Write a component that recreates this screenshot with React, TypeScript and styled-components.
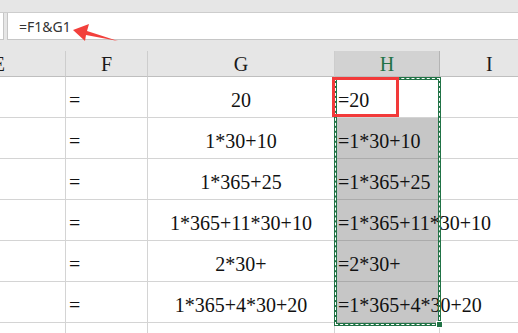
import React from "react";
import styled, { createGlobalStyle } from "styled-components";

const GlobalStyle = createGlobalStyle`
  html, body {
    margin: 0;
    padding: 0;
    background: #ffffff;
    overflow: hidden;
  }
`;

const Page = styled.div`
  position: relative;
  width: 518px;
  height: 333px;
  overflow: hidden;
  background: #e6e6e6;
`;

const TopStrip = styled.div`
  height: 12px;
  background: #e6e6e6;
  border-bottom: 1px solid #cdcdcd;
`;

const FormulaRow = styled.div`
  display: flex;
  height: 27px;
  gap: 3px;
  box-sizing: border-box;
`;

const NameBox = styled.div`
  width: 3px;
  background: #ffffff;
  border-right: 1px solid #c6c6c6;
  border-bottom: 1px solid #c6c6c6;
`;

const FormulaInput = styled.div`
  flex: 1;
  display: flex;
  align-items: center;
  padding-left: 11px;
  background: #ffffff;
  border-left: 1px solid #c6c6c6;
  border-bottom: 1px solid #c6c6c6;
  font-family: "Noto Sans", "Liberation Sans", sans-serif;
  font-size: 14px;
  color: #333333;
`;

const HeaderGap = styled.div`
  height: 11px;
  background: #e6e6e6;
`;

const Sheet = styled.div`
  display: grid;
  grid-template-columns: 136px 82px 187px 105px 100px;
  grid-template-rows: 26px repeat(7, 41px);
  margin-left: -70px;
  background: #ffffff;
`;

const ColHead = styled.div<{ $active?: boolean }>`
  box-sizing: border-box;
  display: flex;
  align-items: center;
  justify-content: center;
  padding-top: 2px;
  background: ${(p) => (p.$active ? "#d2d2d2" : "#e6e6e6")};
  border-right: 1px solid ${(p) => (p.$active ? "#b4b4b4" : "#cdcdcd")};
  border-bottom: 1px solid #bfbfbf;
  font-family: "Liberation Serif", serif;
  font-size: 20px;
  color: ${(p) => (p.$active ? "#217346" : "#1a1a1a")};
`;

const Cell = styled.div<{
  $align?: "left" | "center";
  $selected?: boolean;
}>`
  box-sizing: border-box;
  display: flex;
  align-items: center;
  justify-content: ${(p) => (p.$align === "center" ? "center" : "flex-start")};
  padding: 6px 3px 0 3px;
  white-space: nowrap;
  overflow: visible;
  min-width: 0;
  position: ${(p) => (p.$selected ? "relative" : "static")};
  z-index: ${(p) => (p.$selected ? 1 : "auto")};
  background: ${(p) => (p.$selected ? "#c6c6c6" : "transparent")};
  border-right: 1px solid #d4d4d4;
  border-bottom: 1px solid ${(p) => (p.$selected ? "#ababab" : "#d4d4d4")};
  font-family: "Liberation Serif", serif;
  font-size: 20px;
  color: #111111;
`;

const Marquee = styled.div`
  position: absolute;
  z-index: 2;
  left: 334px;
  top: 77px;
  width: 107px;
  height: 249px;
  box-sizing: border-box;
  border: 3px solid #217346;
  pointer-events: none;

  &::before {
    content: "";
    position: absolute;
    inset: -2px;
    border: 1px dashed #ffffff;
  }

  &::after {
    content: "";
    position: absolute;
    right: -5px;
    bottom: -5px;
    width: 5px;
    height: 5px;
    background: #217346;
    border: 1px solid #ffffff;
  }
`;

const ActiveMark = styled.div`
  position: absolute;
  z-index: 3;
  left: 332px;
  top: 77px;
  width: 67px;
  height: 40px;
  box-sizing: border-box;
  border: 3px solid #f23a3a;
  pointer-events: none;
`;

const Arrow = styled.svg`
  position: absolute;
  z-index: 3;
  left: 0;
  top: 0;
  pointer-events: none;
`;

const rows = [
  { g: "20", h: "=20" },
  { g: "1*30+10", h: "=1*30+10" },
  { g: "1*365+25", h: "=1*365+25" },
  { g: "1*365+11*30+10", h: "=1*365+11*30+10" },
  { g: "2*30+", h: "=2*30+" },
  { g: "1*365+4*30+20", h: "=1*365+4*30+20" },
  { g: "", h: "" },
];

export default function App() {
  return (
    <>
      <GlobalStyle />
      <Page>
        <TopStrip />
        <FormulaRow>
          <NameBox />
          <FormulaInput>=F1&amp;G1</FormulaInput>
        </FormulaRow>
        <HeaderGap />
        <Sheet>
          <ColHead style={{ justifyContent: "flex-end", paddingRight: 60 }}>E</ColHead>
          <ColHead>F</ColHead>
          <ColHead>G</ColHead>
          <ColHead $active>H</ColHead>
          <ColHead style={{ justifyContent: "flex-start", paddingLeft: 46 }}>I</ColHead>
          {rows.map((r, i) => (
            <React.Fragment key={i}>
              <Cell />
              <Cell>{r.g ? "=" : ""}</Cell>
              <Cell $align="center">{r.g}</Cell>
              <Cell $selected={i > 0 && i < 6}>{r.h}</Cell>
              <Cell />
            </React.Fragment>
          ))}
        </Sheet>
        <Marquee />
        <ActiveMark />
        <Arrow width="518" height="60" viewBox="0 0 518 60">
          <polygon
            points="73,30 89,24 87,31 118,41 86,35 85,41"
            fill="#f2403c"
          />
        </Arrow>
      </Page>
    </>
  );
}
